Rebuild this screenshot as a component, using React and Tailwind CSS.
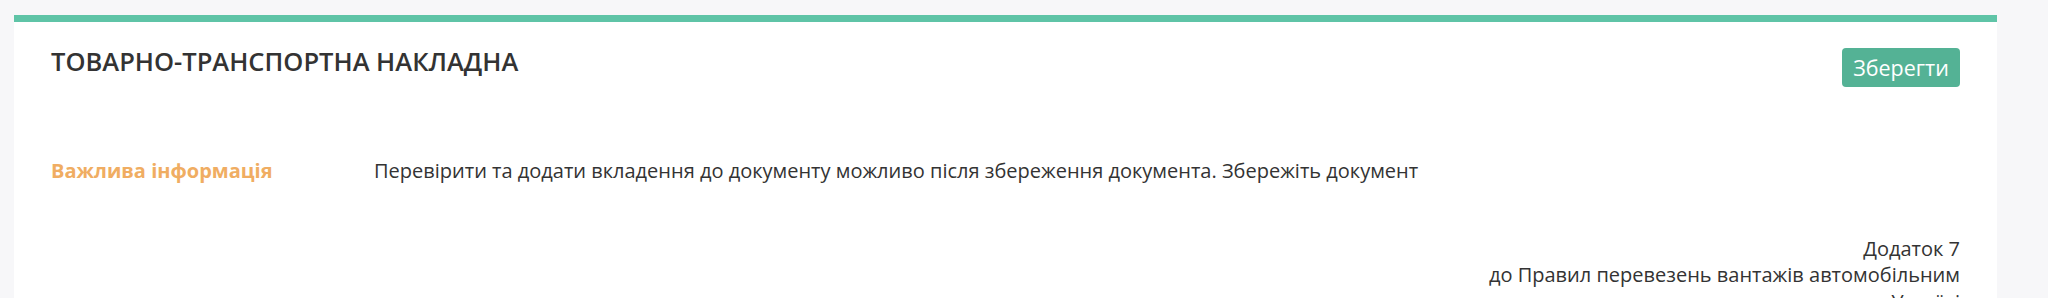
import React from 'react';

const App = () => {
  return (
    <div className="min-h-screen bg-[#f7f7f9] pt-[15px] pl-[14px] pr-[51px] font-['Open_Sans',sans-serif] text-[#333]">
      <div className="bg-white border-t-[7px] border-[#5fc4a7] px-[37px] pb-[40px]">
        <div className="flex justify-between items-start pt-[21px]">
          <h1 className="text-[25.5px] leading-[36px] font-semibold text-[#333]">ТОВАРНО-ТРАНСПОРТНА НАКЛАДНА</h1>
          <button className="mt-[5px] h-[39px] w-[118px] rounded-[4px] bg-[#54b295] text-white text-[21.5px] leading-none flex items-center justify-center">
            Зберегти
          </button>
        </div>

        <div className="flex mt-[71px] text-[20px] leading-[26.67px]">
          <div className="w-[323px] shrink-0 font-bold text-[#f0ad62]">Важлива інформація</div>
          <div>Перевірити та додати вкладення до документу можливо після збереження документа. Збережіть документ</div>
        </div>

        <div className="mt-[51px] text-right text-[20px] leading-[26.67px]">
          <p>Додаток 7</p>
          <p>до Правил перевезень вантажів автомобільним</p>
          <p>транспортом в Україні</p>
        </div>
      </div>
    </div>
  );
};

export default App;
